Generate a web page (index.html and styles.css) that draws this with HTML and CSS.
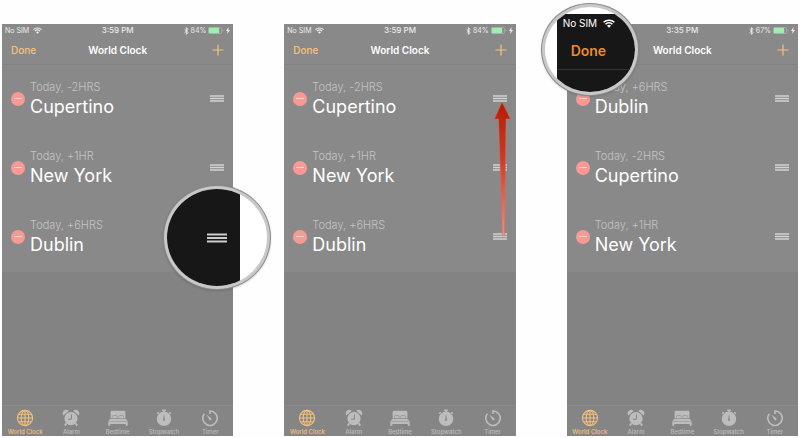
FILE: index.html
```
<!DOCTYPE html>
<html lang="en">
<head>
    <meta charset="UTF-8">
    <title>World Clock</title>
    <link rel="stylesheet" href="styles.css">
</head>
<body>
    <!-- shared icons -->
    <svg class="icon-defs" aria-hidden="true">
        <symbol id="wifi" viewBox="0 0 12 9">
            <path d="M.6 3.3a7.8 7.8 0 0 1 10.8 0M2.5 5.3a5 5 0 0 1 7 0" fill="none" stroke="currentColor" stroke-width="1.5"/>
            <path d="M6 8.8 4 6.7a3 3 0 0 1 4 0z" fill="currentColor"/>
        </symbol>
        <symbol id="bluetooth" viewBox="0 0 5 8">
            <path d="M.6 2.2l3.6 3.4L2.4 7.4V.6l1.8 1.8L.6 5.8" fill="none" stroke="currentColor" stroke-width=".9"/>
        </symbol>
        <symbol id="battery" viewBox="0 0 16 7">
            <rect x=".4" y=".4" width="13.2" height="6.2" rx="1.4" fill="none" stroke="#b4b4b4" stroke-width=".7"/>
            <rect x=".8" y=".8" width="10.4" height="5.4" rx=".6" fill="#a0edb0"/>
            <path d="M14.6 2.3v2.4c1-.4 1-2 0-2.4z" fill="#b4b4b4"/>
        </symbol>
        <symbol id="bolt" viewBox="0 0 4 7">
            <path d="M2.6 0 0 4h1.6L1.2 7 4 2.9H2.3z" fill="currentColor"/>
        </symbol>
        <symbol id="plus" viewBox="0 0 12 12">
            <path d="M6 .5v11M.5 6h11" stroke="currentColor" stroke-width="1.2"/>
        </symbol>
        <symbol id="handle" viewBox="0 0 14 7">
            <path d="M0 1h14M0 3.5h14M0 6h14" stroke="currentColor" stroke-width="1.4"/>
        </symbol>
        <symbol id="globe" viewBox="0 0 18 18">
            <g fill="none" stroke="currentColor" stroke-width="1.1">
                <circle cx="9" cy="9" r="7.6"/>
                <ellipse cx="9" cy="9" rx="3.8" ry="7.6"/>
                <path d="M9 1.4v15.2M1.4 9h15.2M2.6 5.2h12.8M2.6 12.8h12.8"/>
            </g>
        </symbol>
        <symbol id="alarm" viewBox="0 0 18 18">
            <circle cx="9" cy="9.6" r="6.6" fill="currentColor"/>
            <path d="M1.5 5.6A3 3 0 0 1 5.8 1.9zM16.5 5.6A3 3 0 0 0 12.2 1.9z" fill="currentColor" stroke="currentColor" stroke-width="1.2"/>
            <path d="M4.4 14.4 2.8 16.6M13.6 14.4l1.6 2.2" stroke="currentColor" stroke-width="1.8"/>
            <path d="M9.4 5.4v4.8H6" fill="none" stroke="#858585" stroke-width="1"/>
        </symbol>
        <symbol id="bed" viewBox="0 0 20 18">
            <path d="M2.6 9.4V3.4c0-1 .6-1.6 1.6-1.6h11.6c1 0 1.6.6 1.6 1.6v6z" fill="currentColor"/>
            <path d="M4.4 8.6V7.4c0-.5.3-.8.8-.8h3.2c.5 0 .8.3.8.8v1.2M10.8 8.6V7.4c0-.5.3-.8.8-.8h3.2c.5 0 .8.3.8.8v1.2" fill="none" stroke="#858585" stroke-width=".6"/>
            <path d="M2.2 9.8h15.6l1.9 2.6v4.4h-2V15H2.3v1.8h-2v-4.4z" fill="currentColor"/>
            <path d="M.4 12.4h19.2M2.2 9.5h15.6" stroke="#858585" stroke-width=".5"/>
        </symbol>
        <symbol id="stopwatch" viewBox="0 0 18 18">
            <circle cx="9" cy="9.8" r="7.2" fill="currentColor"/>
            <path d="M7.2 1.2h3.6M9 1v3M14.2 3.2l1.6 1.6M3.8 3.2 2.2 4.8" stroke="currentColor" stroke-width="1.4"/>
            <path d="M9 4.8l.9 6.2a.9.9 0 1 1-1.8 0z" fill="#858585"/>
        </symbol>
        <symbol id="timer" viewBox="0 0 18 18">
            <path d="M9 5V2a7.2 7.2 0 1 1-5.6 2.7" fill="none" stroke="currentColor" stroke-width="1.6"/>
            <path d="M5.2 5.6 9.9 9.1A1.1 1.1 0 1 1 8.4 10.5z" fill="currentColor"/>
        </symbol>
    </svg>

    <main class="screens">
        <section class="phone">
            <div class="status-bar">
                <span class="carrier">No SIM <svg class="wifi"><use href="#wifi"/></svg></span>
                <span class="time">3:59 PM</span>
                <span class="power">
                    <svg class="bluetooth"><use href="#bluetooth"/></svg>
                    84%
                    <svg class="battery"><use href="#battery"/></svg>
                    <svg class="bolt"><use href="#bolt"/></svg>
                </span>
            </div>
            <header class="nav-bar">
                <button type="button" class="done">Done</button>
                <h2>World Clock</h2>
                <button type="button" class="add" aria-label="Add"><svg><use href="#plus"/></svg></button>
            </header>
            <ul class="clocks">
                <li>
                    <button type="button" class="remove" aria-label="Remove Cupertino"></button>
                    <div class="clock"><span class="offset">Today, -2HRS</span><span class="city">Cupertino</span></div>
                    <button type="button" class="handle" aria-label="Move Cupertino"><svg><use href="#handle"/></svg></button>
                </li>
                <li>
                    <button type="button" class="remove" aria-label="Remove New York"></button>
                    <div class="clock"><span class="offset">Today, +1HR</span><span class="city">New York</span></div>
                    <button type="button" class="handle" aria-label="Move New York"><svg><use href="#handle"/></svg></button>
                </li>
                <li>
                    <button type="button" class="remove" aria-label="Remove Dublin"></button>
                    <div class="clock"><span class="offset">Today, +6HRS</span><span class="city">Dublin</span></div>
                    <button type="button" class="handle" aria-label="Move Dublin"><svg><use href="#handle"/></svg></button>
                </li>
            </ul>
            <nav class="tab-bar">
                <a href="#" class="active"><svg><use href="#globe"/></svg>World Clock</a>
                <a href="#"><svg><use href="#alarm"/></svg>Alarm</a>
                <a href="#"><svg class="wide"><use href="#bed"/></svg>Bedtime</a>
                <a href="#"><svg><use href="#stopwatch"/></svg>Stopwatch</a>
                <a href="#"><svg><use href="#timer"/></svg>Timer</a>
            </nav>
            <div class="lens lens-handle">
                <div class="lens-screen">
                    <svg class="lens-grip"><use href="#handle"/></svg>
                </div>
            </div>
        </section>

        <section class="phone">
            <div class="status-bar">
                <span class="carrier">No SIM <svg class="wifi"><use href="#wifi"/></svg></span>
                <span class="time">3:59 PM</span>
                <span class="power">
                    <svg class="bluetooth"><use href="#bluetooth"/></svg>
                    84%
                    <svg class="battery"><use href="#battery"/></svg>
                    <svg class="bolt"><use href="#bolt"/></svg>
                </span>
            </div>
            <header class="nav-bar">
                <button type="button" class="done">Done</button>
                <h2>World Clock</h2>
                <button type="button" class="add" aria-label="Add"><svg><use href="#plus"/></svg></button>
            </header>
            <ul class="clocks">
                <li>
                    <button type="button" class="remove" aria-label="Remove Cupertino"></button>
                    <div class="clock"><span class="offset">Today, -2HRS</span><span class="city">Cupertino</span></div>
                    <button type="button" class="handle" aria-label="Move Cupertino"><svg><use href="#handle"/></svg></button>
                </li>
                <li>
                    <button type="button" class="remove" aria-label="Remove New York"></button>
                    <div class="clock"><span class="offset">Today, +1HR</span><span class="city">New York</span></div>
                    <button type="button" class="handle" aria-label="Move New York"><svg><use href="#handle"/></svg></button>
                </li>
                <li>
                    <button type="button" class="remove" aria-label="Remove Dublin"></button>
                    <div class="clock"><span class="offset">Today, +6HRS</span><span class="city">Dublin</span></div>
                    <button type="button" class="handle" aria-label="Move Dublin"><svg><use href="#handle"/></svg></button>
                </li>
            </ul>
            <nav class="tab-bar">
                <a href="#" class="active"><svg><use href="#globe"/></svg>World Clock</a>
                <a href="#"><svg><use href="#alarm"/></svg>Alarm</a>
                <a href="#"><svg class="wide"><use href="#bed"/></svg>Bedtime</a>
                <a href="#"><svg><use href="#stopwatch"/></svg>Stopwatch</a>
                <a href="#"><svg><use href="#timer"/></svg>Timer</a>
            </nav>
            <!-- drag direction arrow -->
            <svg class="drag-arrow" viewBox="0 0 18 136" aria-hidden="true">
                <defs>
                    <linearGradient id="arrow-fill" x1="0" y1="0" x2="0" y2="1">
                        <stop offset="0" stop-color="#b51c04"/>
                        <stop offset=".4" stop-color="#c83a24"/>
                        <stop offset="1" stop-color="#f58d80"/>
                    </linearGradient>
                </defs>
                <path d="M8 1 16.5 18H12L10.6 135H8.4L4.6 18H.5z" fill="url(#arrow-fill)" stroke="#d9695a" stroke-width=".5"/>
            </svg>
        </section>

        <section class="phone">
            <div class="status-bar">
                <span class="carrier"></span>
                <span class="time">3:35 PM</span>
                <span class="power">
                    <svg class="bluetooth"><use href="#bluetooth"/></svg>
                    67%
                    <svg class="battery"><use href="#battery"/></svg>
                    <svg class="bolt"><use href="#bolt"/></svg>
                </span>
            </div>
            <header class="nav-bar">
                <span></span>
                <h2>World Clock</h2>
                <button type="button" class="add" aria-label="Add"><svg><use href="#plus"/></svg></button>
            </header>
            <ul class="clocks">
                <li>
                    <button type="button" class="remove" aria-label="Remove Dublin"></button>
                    <div class="clock"><span class="offset">Today, +6HRS</span><span class="city">Dublin</span></div>
                    <button type="button" class="handle" aria-label="Move Dublin"><svg><use href="#handle"/></svg></button>
                </li>
                <li>
                    <button type="button" class="remove" aria-label="Remove Cupertino"></button>
                    <div class="clock"><span class="offset">Today, -2HRS</span><span class="city">Cupertino</span></div>
                    <button type="button" class="handle" aria-label="Move Cupertino"><svg><use href="#handle"/></svg></button>
                </li>
                <li>
                    <button type="button" class="remove" aria-label="Remove New York"></button>
                    <div class="clock"><span class="offset">Today, +1HR</span><span class="city">New York</span></div>
                    <button type="button" class="handle" aria-label="Move New York"><svg><use href="#handle"/></svg></button>
                </li>
            </ul>
            <nav class="tab-bar">
                <a href="#" class="active"><svg><use href="#globe"/></svg>World Clock</a>
                <a href="#"><svg><use href="#alarm"/></svg>Alarm</a>
                <a href="#"><svg class="wide"><use href="#bed"/></svg>Bedtime</a>
                <a href="#"><svg><use href="#stopwatch"/></svg>Stopwatch</a>
                <a href="#"><svg><use href="#timer"/></svg>Timer</a>
            </nav>
            <!-- enlarged carrier and Done button -->
            <div class="lens lens-done">
                <div class="lens-screen">
                    <div class="lens-status">No SIM <svg><use href="#wifi"/></svg></div>
                    <button type="button" class="lens-button">Done</button>
                </div>
            </div>
        </section>
    </main>
</body>
</html>
```
FILE: styles.css
```
* {
    box-sizing: border-box;
}

body {
    margin: 0;
    background-color: #fefefe;
    font-family: Inter, "Liberation Sans", sans-serif;
    color: #fff;
}

button {
    padding: 0;
    border: none;
    background: none;
    font-family: inherit;
    color: inherit;
    cursor: pointer;
}

svg {
    display: block;
}

.icon-defs {
    display: none;
}

.screens {
    display: grid;
    grid-template-columns: repeat(3, 1fr);
    gap: 51px;
    min-height: 100vh;
    padding: 24px 2px 2px;
}

.phone {
    position: relative;
    display: flex;
    flex-direction: column;
    background-color: #838383;
}

/* status bar */
.status-bar {
    display: grid;
    grid-template-columns: 1fr auto 1fr;
    align-items: center;
    height: 13px;
    padding: 0 3px;
    background-color: #898989;
    font-size: 8px;
    line-height: 13px;
    color: #ececec;
}

.carrier,
.power {
    display: flex;
    align-items: center;
}

.carrier {
    gap: 4px;
    font-size: 7px;
}

.time {
    font-weight: 500;
}

.power {
    justify-content: flex-end;
    gap: 2px;
    font-size: 7px;
}

.wifi {
    width: 9px;
    height: 7px;
}

.bluetooth {
    width: 5px;
    height: 8px;
}

.battery {
    width: 16px;
    height: 7px;
}

.bolt {
    width: 4px;
    height: 7px;
}

/* navigation bar */
.nav-bar {
    display: grid;
    grid-template-columns: 1fr auto 1fr;
    align-items: center;
    height: 28px;
    padding: 0 9px 2px;
    border-bottom: 1px solid #828282;
    background-color: #898989;
}

.nav-bar h2 {
    margin: 0;
    font-size: 10px;
    font-weight: 600;
}

.done {
    justify-self: start;
    font-size: 10px;
    font-weight: 500;
    color: #f5c27e;
}

.add {
    justify-self: end;
    color: #f5c27e;
}

.add svg {
    width: 12px;
    height: 12px;
}

/* clock list */
.clocks {
    flex: 1;
    margin: 0;
    padding: 0;
    list-style: none;
}

.clocks li {
    display: flex;
    align-items: center;
    gap: 5px;
    height: 69px;
    padding: 0 9px 2px;
    background-color: #898989;
}

.remove {
    display: flex;
    align-items: center;
    justify-content: center;
    width: 14px;
    height: 14px;
    border-radius: 50%;
    background-color: #f79a96;
}

.remove::before {
    content: "";
    width: 8px;
    height: 1px;
    background-color: #fcd0cd;
}

.clock {
    display: flex;
    flex: 1;
    flex-direction: column;
}

.offset {
    font-size: 11px;
    font-weight: 300;
    line-height: 16px;
    color: #c4c4c4;
}

.city {
    font-size: 18px;
    line-height: 24px;
}

.handle {
    color: #d2d2d2;
}

.handle svg {
    width: 14px;
    height: 7px;
}

/* tab bar */
.tab-bar {
    display: grid;
    grid-template-columns: repeat(5, 1fr);
    height: 31px;
    border-top: 1px solid #8c8c8c;
    background-color: #858585;
}

.tab-bar a {
    display: flex;
    flex-direction: column;
    align-items: center;
    padding-top: 3px;
    font-size: 6px;
    font-weight: 500;
    line-height: 9px;
    white-space: nowrap;
    text-decoration: none;
    color: #bdbdbd;
}

.tab-bar a.active {
    color: #f5c27e;
}

.tab-bar svg {
    width: 18px;
    height: 18px;
}

.tab-bar svg.wide {
    width: 20px;
}

/* magnifier lenses laid over the screens */
.lens {
    position: absolute;
    overflow: hidden;
    border: 3px solid #c8c8c8;
    border-radius: 50%;
    background-color: #fff;
    box-shadow: 0 0 0 1px #8a8a8a, 0 1px 3px rgba(0, 0, 0, 0.3);
}

.lens-screen {
    height: 100%;
    background-color: #171717;
}

.lens-handle {
    top: 162px;
    right: -37px;
    width: 106px;
    height: 103px;
}

.lens-handle .lens-screen {
    display: flex;
    align-items: center;
    justify-content: flex-end;
    width: 73px;
    padding-right: 13px;
}

.lens-grip {
    width: 20px;
    height: 10px;
    color: #ccc;
}

.lens-done {
    top: -20px;
    left: -25px;
    width: 96px;
    height: 91px;
    padding: 7px 0 0 12px;
}

.lens-done .lens-screen {
    display: flex;
    flex-direction: column;
    align-items: flex-start;
}

.lens-status {
    display: flex;
    align-items: center;
    gap: 6px;
    padding-left: 6px;
    font-size: 10px;
    line-height: 18px;
}

.lens-status svg {
    width: 12px;
    height: 9px;
}

.lens-button {
    align-self: stretch;
    height: 38px;
    padding-left: 14px;
    border-bottom: 1px solid #333;
    font-size: 14px;
    font-weight: 600;
    text-align: left;
    color: #ee8a2c;
}

.drag-arrow {
    position: absolute;
    top: 77px;
    right: 4px;
    width: 18px;
    height: 136px;
}
```
